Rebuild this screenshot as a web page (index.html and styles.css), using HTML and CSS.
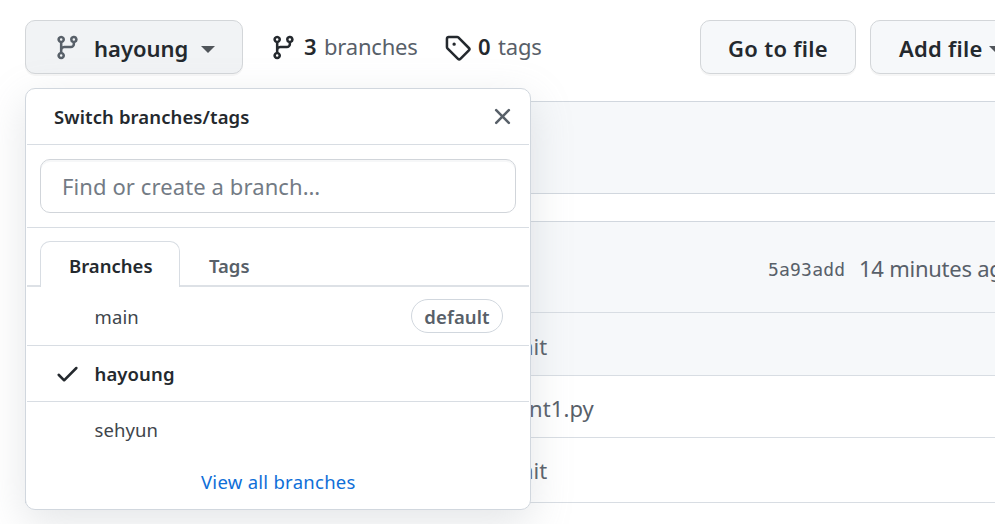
FILE: index.html
```html
<!DOCTYPE html>
<html lang="en">
<head>
<meta charset="utf-8">
<title>Branches</title>
<link rel="stylesheet" href="styles.css">
</head>
<body>
<svg class="defs" width="0" height="0"><defs>
<symbol id="branch" viewBox="0 0 16 16"><path fill-rule="evenodd" d="M11.75 2.5a.75.75 0 100 1.5.75.75 0 000-1.5zm-2.25.75a2.25 2.25 0 113 2.122V6A2.5 2.5 0 0110 8.5H6a1 1 0 00-1 1v1.128a2.251 2.251 0 11-1.5 0V5.372a2.25 2.25 0 111.5 0v1.836A2.492 2.492 0 016 7h4a1 1 0 001-1v-.628A2.25 2.25 0 019.5 3.25zM4.25 12a.75.75 0 100 1.5.75.75 0 000-1.5zM3.5 3.25a.75.75 0 111.5 0 .75.75 0 01-1.5 0z"/></symbol>
</defs></svg>
<main class="page">
  <div class="toolbar">
    <button class="btn btn-branch"><svg class="icon muted"><use href="#branch"/></svg><span class="t-current">hayoung</span><i class="caret"></i></button>
    <a class="stat stat-branches"><svg class="icon"><use href="#branch"/></svg><strong>3</strong><span class="t-branches">branches</span></a>
    <a class="stat stat-tags"><svg class="icon" viewBox="0 0 16 16"><path fill-rule="evenodd" d="M2.5 7.775V2.75a.25.25 0 01.25-.25h5.025a.25.25 0 01.177.073l6.25 6.25a.25.25 0 010 .354l-5.025 5.025a.25.25 0 01-.354 0l-6.25-6.25a.25.25 0 01-.073-.177zm-1.5 0V2.75C1 1.784 1.784 1 2.75 1h5.025c.464 0 .91.184 1.238.513l6.25 6.25a1.75 1.75 0 010 2.474l-5.026 5.026a1.75 1.75 0 01-2.474 0l-6.25-6.25A1.75 1.75 0 011 7.775zM6 5a1 1 0 100 2 1 1 0 000-2z"/></svg><strong>0</strong><span class="t-tags">tags</span></a>
    <button class="btn btn-go"><span class="t-go">Go to file</span></button>
    <button class="btn btn-add"><span class="t-add">Add file</span><i class="caret"></i></button>
  </div>
  <section class="notice"></section>
  <section class="files">
    <div class="row commit"><code>5a93add</code><span class="t-time">14 minutes ago</span></div>
    <div class="row shaded"><span class="msg">nit</span></div>
    <div class="row plain"><span class="msg msg-py">nt1.py</span></div>
    <div class="row last"><span class="msg">nit</span></div>
  </section>
</main>
<div class="popup">
  <header class="popup-head"><span class="t-switch">Switch branches/tags</span><svg class="icon muted" viewBox="0 0 16 16"><path fill-rule="evenodd" d="M3.72 3.72a.75.75 0 011.06 0L8 6.94l3.22-3.22a.75.75 0 111.06 1.06L9.06 8l3.22 3.22a.75.75 0 11-1.06 1.06L8 9.06l-3.22 3.22a.75.75 0 01-1.06-1.06L6.94 8 3.72 4.78a.75.75 0 010-1.06z"/></svg></header>
  <div class="search"><div class="field"><span class="t-find">Find or create a branch…</span></div></div>
  <nav class="tabs"><div class="tab active"><span class="t-tab1">Branches</span></div><div class="tab"><span class="t-tab2">Tags</span></div></nav>
  <div class="item first"><span class="t-main">main</span><span class="pill"><span class="t-default">default</span></span></div>
  <div class="item chosen"><svg class="icon check" viewBox="0 0 16 16"><path fill-rule="evenodd" d="M13.78 4.22a.75.75 0 010 1.06l-7.25 7.25a.75.75 0 01-1.06 0L2.22 9.28a.75.75 0 011.06-1.06L6 10.94l6.72-6.72a.75.75 0 011.06 0z"/></svg><span class="t-hayoung">hayoung</span></div>
  <div class="item"><span class="t-sehyun">sehyun</span></div>
  <footer class="all"><a class="t-all">View all branches</a></footer>
</div>
</body>
</html>
```
FILE: styles.css
```css
* { box-sizing: border-box; }
html, body { overflow: hidden; }
body { margin: 0; height: 524px; background: #fff; color: #24292e; font: 22px/30px "Noto Sans", "Open Sans", sans-serif; white-space: nowrap; }
.defs { position: absolute; }
.icon { width: 27px; height: 27px; fill: #24292e; flex: none; }
.muted { fill: #586069; }
.toolbar { display: flex; height: 101px; padding: 20px 0 0 25px; align-items: flex-start; }
.btn { flex: none; display: flex; align-items: center; height: 54px; padding: 1px 0 0 27px; border: 1px solid #d3d6d9; border-radius: 10px; background: #f6f8fa; color: #24292e; font: 600 22px/30px "Noto Sans", sans-serif; box-shadow: 0 2px 0 rgba(27,31,35,.04); text-align: left; }
.btn-branch { width: 218px; padding-left: 28px; background: #f1f3f5; }
.btn-branch span { width: 94px; margin: 0 13px 0 13px; }
.caret { width: 0; border: 7px solid transparent; border-top-color: #50555a; border-bottom: 0; flex: none; margin-top: 3px; }
.stat { flex: none; display: flex; height: 54px; align-items: center; color: #586069; }
.stat span, .stat strong { padding-bottom: 2px; letter-spacing: -.2px; }
.stat strong { font-weight: 600; color: #24292e; width: 13px; margin: 0 7px 0 7px; }
.stat-branches { width: 174px; margin-left: 27px; }
.stat-tags { width: 256px; }
.btn-go { width: 156px; margin-right: 14px; }
.t-go { letter-spacing: .3px; }
.btn-add { width: 156px; padding-left: 28px; }
.btn-add span { width: 84px; margin-right: 6px; letter-spacing: .25px; }
.notice, .files { margin-left: 25px; border-left: 1px solid #d1d7de; }
.notice { height: 93px; border-top: 1px solid #d1d7de; border-bottom: 1px solid #d1d7de; background: #f6f8fa; }
.files { margin-top: 27px; border-top: 1px solid #d1d7de; color: #586069; }
.row { display: flex; align-items: center; border-bottom: 1px solid #d8dde3; }
.commit { height: 91px; padding: 2px 0 0 742px; background: #f6f8fa; }
.commit code { flex: none; width: 91px; font: 18px/24px "DejaVu Sans Mono", monospace; letter-spacing: .2px; padding-top: 4px; }
.t-time { letter-spacing: -.25px; }
.shaded { height: 63px; background: #f6f8fa; padding-top: 4px; }
.plain { height: 62px; padding-top: 3px; }
.last { height: 65px; }
.msg { margin-left: 494px; }
.msg-py { margin-left: 503px; letter-spacing: .1px; }
.popup { position: absolute; left: 25px; top: 88px; width: 506px; height: 422px; border: 1px solid #d1d7de; border-radius: 10px; background: #fff; box-shadow: 0 13px 40px rgba(149,157,165,.25); font-size: 18.5px; line-height: 26px; padding: 0 1px; }
.popup-head { display: flex; justify-content: space-between; align-items: center; height: 56px; padding: 0 13px 0 27px; border-bottom: 1px solid #d8dde3; font-weight: 600; letter-spacing: .1px; }
.search { height: 83px; padding: 14px 12px; border-bottom: 1px solid #d8dde3; }
.field { display: flex; align-items: center; width: 476px; height: 54px; padding: 0 0 0 21px; border: 1px solid #d1d5da; border-radius: 10px; font-size: 22px; color: #737b85; box-shadow: inset 0 2px 0 rgba(225,228,232,.3); margin-left: 1px; letter-spacing: .1px; }
.tabs { display: flex; align-items: flex-end; height: 59px; padding-left: 13px; border-bottom: 2px solid #dde1e6; }
.tab { height: 46px; padding: 14px 0 0 29px; font-weight: 600; color: #586069; }
.active { width: 140px; margin-bottom: -2px; padding: 11px 0 0 28px; color: #24292e; border: 1px solid #d8dde3; border-bottom: 0; border-radius: 10px 10px 0 0; background: #fff; }
.item { display: flex; align-items: center; height: 56px; padding: 0 26px 0 67.5px; color: #40454b; letter-spacing: .1px; }
.first { height: 59px; padding-top: 1px; border-bottom: 1px solid #d8dde3; justify-content: space-between; }
.chosen { padding-left: 27px; border-bottom: 1px solid #d8dde3; font-weight: 600; color: #24292e; }
.check { margin-right: 13px; }
.t-hayoung { margin-left: .5px; }
.pill { display: flex; justify-content: center; align-items: center; width: 92px; height: 34px; margin-bottom: 2px; border: 1px solid #d1d7de; border-radius: 17px; color: #586069; font-weight: 600; padding-top: 2px; }
.all { display: flex; padding: 11px 0 0 174px; color: #0f6fd8; letter-spacing: .27px; }
```
